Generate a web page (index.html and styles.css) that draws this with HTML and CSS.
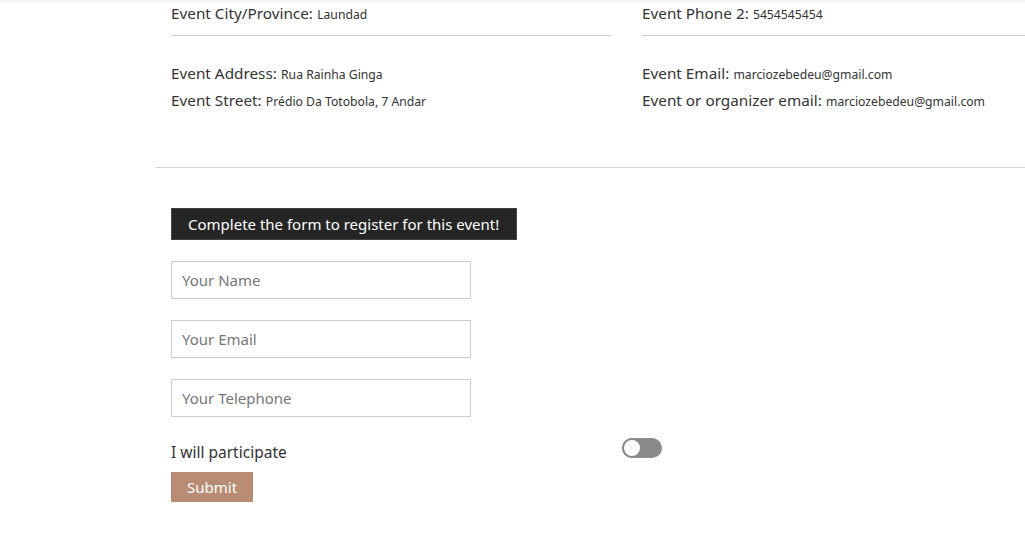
FILE: index.html
```html
<!DOCTYPE html>
<html lang="en">
<head>
<meta charset="utf-8">
<title>Event</title>
<link rel="stylesheet" href="styles.css">
</head>
<body>
<div class="page">
  <main class="container">
    <div class="row">
      <div class="col">
        <div class="item underlined"><span class="lbl">Event City/Province:</span> <span class="val">Laundad</span></div>
        <div class="group">
          <div class="item"><span class="lbl">Event Address:</span> <span class="val">Rua Rainha Ginga</span></div>
          <div class="item"><span class="lbl">Event Street:</span> <span class="val">Prédio Da Totobola, 7 Andar</span></div>
        </div>
      </div>
      <div class="col">
        <div class="item underlined"><span class="lbl">Event Phone 2:</span> <span class="val">5454545454</span></div>
        <div class="group">
          <div class="item"><span class="lbl">Event Email:</span> <span class="val">marciozebedeu@gmail.com</span></div>
          <div class="item"><span class="lbl">Event or organizer email:</span> <span class="val">marciozebedeu@gmail.com</span></div>
        </div>
      </div>
    </div>
    <hr class="sep">
    <section class="register">
      <h2 class="form-title">Complete the form to register for this event!</h2>
      <form class="form">
        <input class="field" type="text" placeholder="Your Name">
        <input class="field" type="email" placeholder="Your Email">
        <input class="field" type="tel" placeholder="Your Telephone">
        <div class="participate">
          <span class="participate-label">I will participate</span>
          <span class="toggle"><span class="knob"></span></span>
        </div>
        <button class="submit" type="button">Submit</button>
      </form>
    </section>
    <p class="foot">Published by the event organizer</p>
  </main>
</div>
</body>
</html>
```
FILE: styles.css
```css
html, body {
  margin: 0;
  padding: 0;
  overflow: hidden;
  background: #fff;
}
body {
  font-family: "Noto Sans", "Open Sans", sans-serif;
  color: #333;
}
.page {
  box-shadow: inset 0 3px 3px -2px rgba(0, 0, 0, 0.08);
  height: 560px;
  overflow: hidden;
}
.container {
  margin-left: 156px;
  width: 942px;
}
.row {
  display: flex;
  gap: 1px;
}
.col {
  width: 470px;
  flex: none;
  padding: 0 15px;
  box-sizing: border-box;
}
.item {
  height: 27px;
  line-height: 27px;
  white-space: nowrap;
}
.underlined {
  padding-bottom: 8px;
  border-bottom: 1px solid #cfcfcf;
}
.group {
  margin-top: 24px;
}
.lbl {
  font-size: 15.3px;
  color: #333;
}
.val {
  font-size: 12.2px;
  color: #333;
}
.sep {
  margin: 53px 0 0;
  height: 0;
  border: 0;
  border-top: 1px solid #d3d3d3;
  width: 942px;
}
.register {
  padding: 40px 15px 0;
}
.form-title {
  display: inline-block;
  margin: 0;
  background: #252525;
  border: 1px solid #444;
  color: #fff;
  font-size: 15px;
  font-weight: 400;
  line-height: 30px;
  padding: 0 17px 0 16px;
}
.form {
  display: flex;
  flex-direction: column;
  align-items: flex-start;
  margin-top: 21px;
}
.field {
  width: 300px;
  height: 38px;
  box-sizing: border-box;
  border: 1px solid #cdcdcd;
  padding: 0 10px;
  margin: 0 0 21px;
  font-family: inherit;
  font-size: 15px;
  color: #333;
  outline: none;
}
.field::placeholder {
  color: #767676;
}
.participate {
  display: flex;
  align-items: flex-start;
  height: 34px;
}
.participate-label {
  width: 451px;
  font-size: 15.5px;
  line-height: 24px;
  margin-top: 2px;
}
.toggle {
  width: 40px;
  height: 20px;
  border-radius: 10px;
  background: #8a8a8a;
  position: relative;
}
.knob {
  position: absolute;
  left: 0;
  top: 0;
  width: 20px;
  height: 20px;
  box-sizing: border-box;
  border-radius: 50%;
  background: #fff;
  border: 2px solid #8a8a8a;
}
.submit {
  height: 30px;
  padding: 0 16px;
  border: 0;
  background: #b98b73;
  color: #fff;
  font-family: inherit;
  font-size: 15px;
}
.foot {
  margin: 56px 0 0;
  font-size: 12px;
  color: #666;
  line-height: 16px;
}
```
